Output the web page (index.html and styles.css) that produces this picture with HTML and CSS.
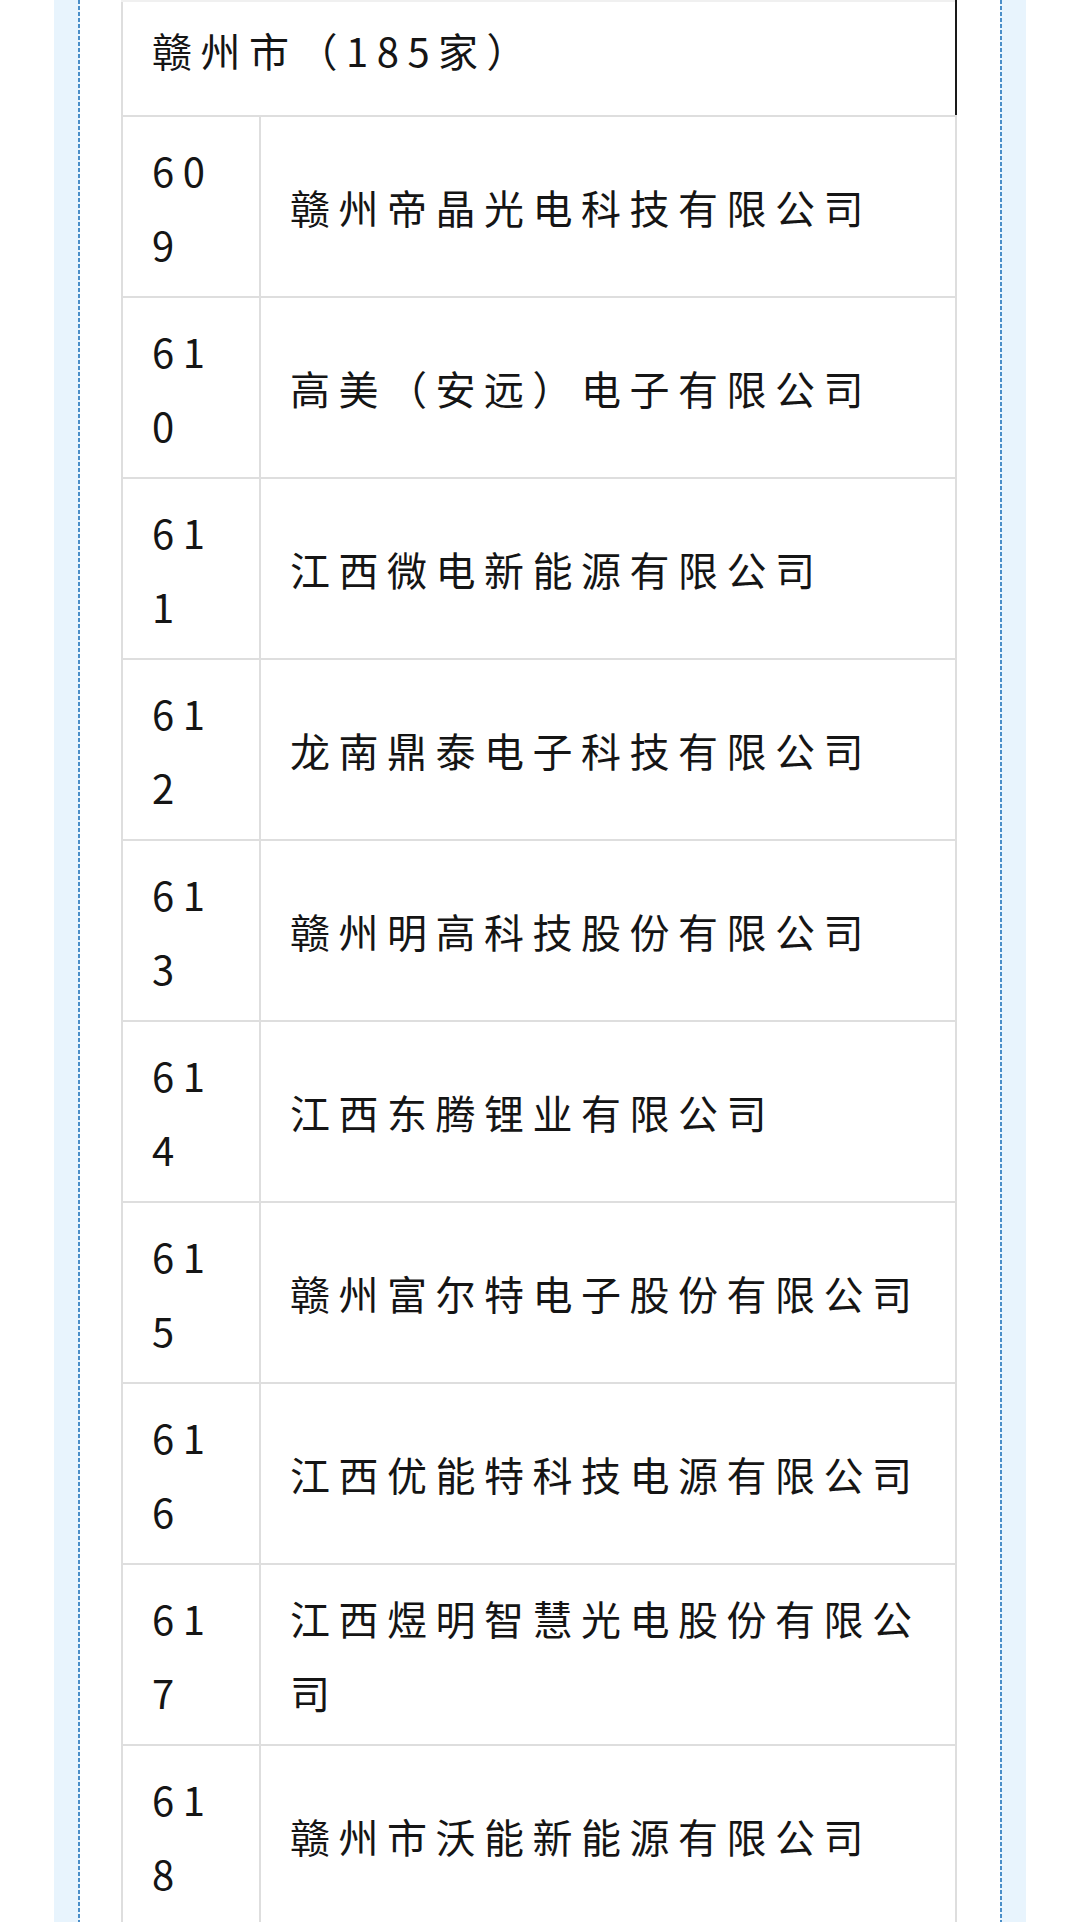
FILE: index.html
```html
<!DOCTYPE html>
<html lang="zh-CN">
<head>
<meta charset="utf-8">
<title>赣州市（185家）</title>
<link rel="stylesheet" href="styles.css">
</head>
<body>
<div class="page">
  <section class="frame">
    <table class="list">
      <colgroup>
        <col class="col-no">
        <col class="col-name">
      </colgroup>
      <thead>
        <tr><th colspan="2" class="city">赣州市（185家）</th></tr>
      </thead>
      <tbody>
        <tr><td class="no">609</td><td class="name">赣州帝晶光电科技有限公司</td></tr>
        <tr><td class="no">610</td><td class="name">高美（安远）电子有限公司</td></tr>
        <tr><td class="no">611</td><td class="name">江西微电新能源有限公司</td></tr>
        <tr><td class="no">612</td><td class="name">龙南鼎泰电子科技有限公司</td></tr>
        <tr><td class="no">613</td><td class="name">赣州明高科技股份有限公司</td></tr>
        <tr><td class="no">614</td><td class="name">江西东腾锂业有限公司</td></tr>
        <tr><td class="no">615</td><td class="name">赣州富尔特电子股份有限公司</td></tr>
        <tr><td class="no">616</td><td class="name">江西优能特科技电源有限公司</td></tr>
        <tr><td class="no">617</td><td class="name">江西煜明智慧光电股份有限公司</td></tr>
        <tr><td class="no">618</td><td class="name">赣州市沃能新能源有限公司</td></tr>
      </tbody>
    </table>
  </section>
</div>
</body>
</html>
```
FILE: styles.css
```css
html, body {
  margin: 0;
  padding: 0;
  background: #ffffff;
}

body {
  font-family: "Noto Sans CJK SC", "Noto Sans", sans-serif;
  color: #151515;
}

.page {
  padding: 0 54px;
}

.frame {
  min-height: 1922px;
  padding: 0 67px 0 67px;
  background:
    repeating-linear-gradient(to bottom, #4a8ec8 0 4px, transparent 4px 6px) left 24px top 0 / 2px 100% no-repeat,
    repeating-linear-gradient(to bottom, #4a8ec8 0 4px, transparent 4px 6px) right 24px top 0 / 2px 100% no-repeat,
    linear-gradient(#e8f4fd, #e8f4fd) left top / 26px 100% no-repeat,
    linear-gradient(#e8f4fd, #e8f4fd) right top / 26px 100% no-repeat,
    #ffffff;
}

.list {
  width: 836px;
  border-collapse: collapse;
  table-layout: fixed;
  border: 2px solid #dedede;
  border-top-color: #f0f0f0;
  font-size: 40px;
  line-height: 74px;
  letter-spacing: 8.5px;
}

.col-no {
  width: 138px;
}

.list th,
.list td {
  border: 2px solid #dedede;
  padding: 15.5px 24px 15.5px 29px;
  text-align: left;
  font-weight: 400;
  word-break: break-all;
  vertical-align: middle;
}

.list th.city {
  padding: 11px 24px 28px 29px;
  border-top-color: #f0f0f0;
  border-right: 2px solid #1a1a1a;
}
```
